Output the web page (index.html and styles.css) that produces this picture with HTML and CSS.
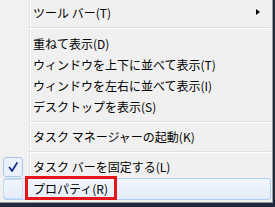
FILE: index.html
```html
<!DOCTYPE html>
<html lang="ja">
<head>
<meta charset="utf-8">
<link rel="stylesheet" href="styles.css">
</head>
<body>
<div class="menu">
  <div class="item first">
    <span class="label">ツール バー(T)</span>
    <span class="arrow"></span>
  </div>
  <div class="sep sep-top"></div>
  <div class="item"><span class="label">重ねて表示(D)</span></div>
  <div class="item"><span class="label">ウィンドウを上下に並べて表示(T)</span></div>
  <div class="item"><span class="label">ウィンドウを左右に並べて表示(I)</span></div>
  <div class="item"><span class="label">デスクトップを表示(S)</span></div>
  <div class="sep"></div>
  <div class="item"><span class="label">タスク マネージャーの起動(K)</span></div>
  <div class="sep"></div>
  <div class="item tall">
    <span class="check">
      <svg width="20" height="20" viewBox="0 0 20 20"><path d="M6.5 10.5 L9 14 L14 6" fill="none" stroke="#1c2f8c" stroke-width="1.8" stroke-linecap="round" stroke-linejoin="round"/></svg>
    </span>
    <span class="label">タスク バーを固定する(L)</span>
  </div>
  <div class="item tall hover">
    <span class="check blank"></span>
    <span class="label">プロパティ(R)</span>
    <span class="mark"></span>
  </div>
</div>
</body>
</html>
```
FILE: styles.css
```css
html, body {
  margin: 0;
  padding: 0;
}
body {
  width: 275px;
  height: 207px;
  background: #1f2a3c;
  overflow: hidden;
  font-family: "Noto Sans CJK JP", "Noto Sans", sans-serif;
  font-size: 12px;
  color: #000;
}
.menu {
  position: relative;
  box-sizing: border-box;
  width: 273px;
  height: 203px;
  padding: 2px 0 0 0;
  border-right: 1px solid #9a9a9a;
  border-bottom: 1px solid #9a9a9a;
  background: linear-gradient(to right, #f1f1f1 0 29px, #e2e3e3 29px 30px, #ffffff 30px 31px, #f0f0f0 31px);
}
.item {
  position: relative;
  display: flex;
  align-items: center;
  height: 21px;
  margin: 0 1px 0 3px;
  padding-left: 30px;
  box-sizing: border-box;
  line-height: 1;
}
.item.first {
  height: 22px;
}
.item.tall {
  height: 22px;
}
.label {
  white-space: nowrap;
}
.arrow {
  position: absolute;
  right: 11px;
  top: 7px;
  width: 0;
  height: 0;
  border-top: 3.5px solid transparent;
  border-bottom: 3.5px solid transparent;
  border-left: 4px solid #000;
}
.sep {
  height: 9px;
  margin-left: 29px;
  margin-right: 1px;
  background: linear-gradient(to bottom, transparent 0 4px, #e0e0e0 4px 5px, #ffffff 5px 6px, transparent 6px);
}
.sep.sep-top {
  background: linear-gradient(to bottom, transparent 0 3px, #e0e0e0 3px 4px, #ffffff 4px 5px, transparent 5px);
}
.check {
  position: absolute;
  left: 0;
  top: 1px;
  width: 20px;
  height: 20px;
  box-sizing: border-box;
  border: 1px solid #a9c6ea;
  border-radius: 3px;
  background: #eaf1fa;
}
.check svg {
  position: absolute;
  left: -1px;
  top: -1px;
}
.check.blank {
  border-color: #c9dcf3;
  background: transparent;
}
.hover {
  border: 1px solid #aecff7;
  border-radius: 3px;
  background: linear-gradient(to bottom, #f2f6fc, #e4ecf8);
  padding-left: 29px;
}
.hover .check {
  top: 0;
  left: -1px;
}
.mark {
  position: absolute;
  left: 21px;
  top: -3px;
  width: 92px;
  height: 24px;
  box-sizing: border-box;
  border: 3px solid #e8141c;
}
```
